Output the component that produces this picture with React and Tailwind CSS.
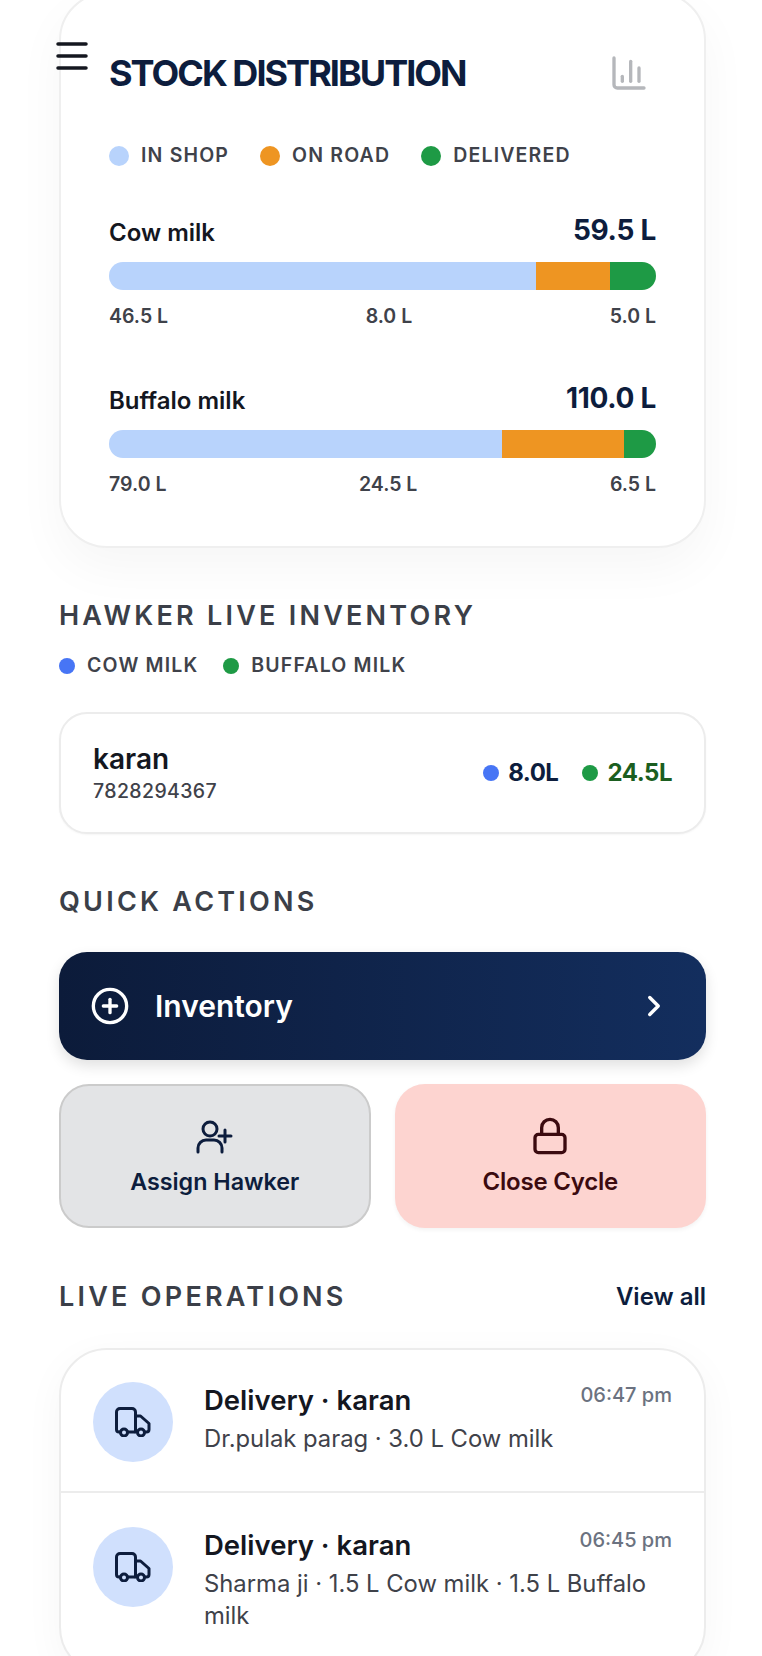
import React from 'react';
import { ChartColumn, ChevronRight, CirclePlus, Lock } from 'lucide-react';

const stock = [
  { name: 'Cow milk', total: '59.5 L', shop: 46.5, road: 8.0, done: 5.0 },
  { name: 'Buffalo milk', total: '110.0 L', shop: 79.0, road: 24.5, done: 6.5 },
];

const operations = [
  { time: '06:47 pm', text: 'Dr.pulak parag · 3.0 L Cow milk' },
  { time: '06:45 pm', text: 'Sharma ji · 1.5 L Cow milk · 1.5 L Buffalo milk' },
];

function LegendItem({ color, label }) {
  return (
    <div className="flex items-center gap-[12px]">
      <span className={`w-5 h-5 rounded-full ${color}`} />
      <span className="text-[19.5px] leading-none font-semibold tracking-[0.06em] text-[#3f424a]">{label}</span>
    </div>
  );
}

function StockRow({ item }) {
  return (
    <div>
      <div className="flex justify-between items-end h-[36px]">
        <span className="text-[24px] leading-[28px] mb-[7px] font-semibold text-[#14171f]">{item.name}</span>
        <span className="text-[28px] leading-[36px] mb-[6px] font-bold tracking-[-0.01em] text-[#0d1d3d]">{item.total}</span>
      </div>
      <div className="flex h-[28px] mt-[8px] rounded-full overflow-hidden">
        <div className="bg-[#b8d3fc]" style={{ flexGrow: item.shop, flexBasis: 0 }} />
        <div className="bg-[#ee9522]" style={{ flexGrow: item.road, flexBasis: 0 }} />
        <div className="bg-[#1e9a45]" style={{ flexGrow: item.done, flexBasis: 0 }} />
      </div>
      <div className="flex justify-between mt-[14px] text-[19.5px] leading-[24px] font-semibold text-[#3f424a]">
        <span>{item.shop.toFixed(1)} L</span>
        <span>{item.road.toFixed(1)} L</span>
        <span>{item.done.toFixed(1)} L</span>
      </div>
    </div>
  );
}

function SectionTitle({ children }) {
  return <h2 className="text-[27px] leading-[34px] font-semibold tracking-[0.12em] text-[#3b3f48]">{children}</h2>;
}

function TruckIcon() {
  return (
    <svg width="36" height="30" viewBox="0 0 36 30" fill="none" stroke="#0d1d3d" strokeWidth="3" strokeLinecap="round" strokeLinejoin="round">
      <path d="M5.5 25H4a2.5 2.5 0 0 1-2.5-2.5V5A3.5 3.5 0 0 1 5 1.5h12A3.5 3.5 0 0 1 20.5 5V25" />
      <path d="M12.5 25h7" />
      <path d="M20.5 9h5l8.5 7.5v6a2.5 2.5 0 0 1-2.5 2.5h-1" />
      <circle cx="9" cy="25.5" r="3.5" />
      <circle cx="26" cy="25.5" r="3.5" />
    </svg>
  );
}

function AssignIcon() {
  return (
    <svg width="38" height="34" viewBox="0 0 38 34" fill="none" stroke="#0d1d3d" strokeWidth="3" strokeLinecap="round">
      <circle cx="14" cy="9" r="7" />
      <path d="M2 32v-4a8 8 0 0 1 8-8h8a8 8 0 0 1 8 8v4" />
      <path d="M29 10v12M23 16h12" />
    </svg>
  );
}

function OperationRow({ op, last }) {
  return (
    <div className={`flex gap-[31px] px-[32px] ${last ? 'pt-[34px] pb-[41px]' : 'pt-[32px] pb-[29px] border-b-2 border-[#ececec]'}`}>
      <div className="w-[80px] h-[80px] shrink-0 rounded-full bg-[#d0e0fd] flex items-center justify-center">
        <TruckIcon />
      </div>
      <div className="flex-1 min-w-0">
        <div className="flex justify-between items-start">
          <span className="text-[27.5px] leading-[36px] font-semibold text-[#14171f]">Delivery · karan</span>
          <span className="text-[20px] leading-[26px] font-medium text-[#6b7280]">{op.time}</span>
        </div>
        <p className="mt-[5px] text-[23.8px] leading-[32px] text-[#3f424a]">{op.text}</p>
      </div>
    </div>
  );
}

export default function App() {
  return (
    <div className="relative h-[1656px] overflow-hidden bg-white pl-[59px] pr-[56px]" style={{ fontFamily: 'Inter, sans-serif' }}>
      {/* menu button floats over the page */}
      <button className="absolute left-[56px] top-[42px]">
        <svg width="32" height="28" viewBox="0 0 32 28" fill="none" stroke="#14171f" strokeWidth="3.5" strokeLinecap="round">
          <path d="M2 2h28M2 14h28M2 26h28" />
        </svg>
      </button>

      <section className="-mt-[8px] rounded-[48px] border-2 border-[#efefef] bg-white px-[48px] pt-[61px] pb-[50px] shadow-[0_20px_50px_rgba(0,0,0,0.04)]">
        <div className="flex justify-between items-center h-[36px]">
          <h1 className="text-[36px] leading-[36px] font-bold tracking-[-0.055em] text-[#0d1d3d]">STOCK DISTRIBUTION</h1>
          <ChartColumn size={40} strokeWidth={2} className="text-[#b5b7bb] mr-[7px]" />
        </div>
        <div className="flex gap-[31px] mt-[55px]">
          <LegendItem color="bg-[#b8d3fc]" label="IN SHOP" />
          <LegendItem color="bg-[#ee9522]" label="ON ROAD" />
          <LegendItem color="bg-[#1e9a45]" label="DELIVERED" />
        </div>
        <div className="flex flex-col gap-[58px] mt-[52px]">
          {stock.map(item => (
            <StockRow key={item.name} item={item} />
          ))}
        </div>
      </section>

      <section className="mt-[51px]">
        <SectionTitle>HAWKER LIVE INVENTORY</SectionTitle>
        <div className="flex items-center gap-[25px] mt-[23px]">
          <div className="flex items-center gap-[12px]">
            <span className="w-4 h-4 rounded-full bg-[#4775f5]" />
            <span className="text-[19.5px] leading-none font-semibold tracking-[0.06em] text-[#3f424a]">COW MILK</span>
          </div>
          <div className="flex items-center gap-[12px]">
            <span className="w-4 h-4 rounded-full bg-[#1e9a45]" />
            <span className="text-[19.5px] leading-none font-semibold tracking-[0.06em] text-[#3f424a]">BUFFALO MILK</span>
          </div>
        </div>
        <div className="flex justify-between items-center h-[122px] mt-[36px] px-[32px] rounded-[28px] border-2 border-[#ececec] bg-white shadow-[0_1px_2px_rgba(0,0,0,0.04)]">
          <div>
            <div className="text-[28px] leading-[34px] font-semibold text-[#14171f]">karan</div>
            <div className="mt-[3px] text-[19.5px] leading-[24px] font-medium text-[#3f424a] tracking-[0.02em]">7828294367</div>
          </div>
          <div className="flex items-center gap-[24px] text-[24px] leading-none font-bold tracking-[-0.02em]">
            <div className="flex items-center gap-[9px] text-[#0d1d3d]">
              <span className="w-4 h-4 rounded-full bg-[#4775f5]" />
              8.0L
            </div>
            <div className="flex items-center gap-[9px] text-[#1b5e20]">
              <span className="w-4 h-4 rounded-full bg-[#1e9a45]" />
              24.5L
            </div>
          </div>
        </div>
      </section>

      <section className="mt-[51px]">
        <SectionTitle>QUICK ACTIONS</SectionTitle>
        <button className="flex items-center w-full h-[108px] mt-[33px] pl-[31px] pr-[35px] rounded-[28px] bg-gradient-to-r from-[#0c1b3a] to-[#132e5e] text-white shadow-[0_6px_14px_rgba(0,0,0,0.12)]">
          <CirclePlus size={40} strokeWidth={2} />
          <span className="ml-[25px] text-[30px] leading-none font-semibold">Inventory</span>
          <ChevronRight size={34} strokeWidth={2.4} className="ml-auto" />
        </button>
        <div className="grid grid-cols-2 gap-[24px] mt-[24px]">
          <button className="flex flex-col items-center justify-center h-[144px] pt-[6px] rounded-[30px] border-2 border-[#cbcbcb] bg-[#e3e4e6] text-[#0d1d3d]">
            <AssignIcon />
            <span className="mt-[12px] text-[23.3px] leading-[32px] font-semibold">Assign Hawker</span>
          </button>
          <button className="flex flex-col items-center justify-center h-[144px] pt-[3px] rounded-[30px] bg-[#fdd4d0] text-[#3b0a0f] shadow-[0_2px_4px_rgba(0,0,0,0.05)]">
            <Lock size={40} strokeWidth={2} />
            <span className="mt-[10px] text-[24px] leading-[32px] font-semibold tracking-[-0.01em]">Close Cycle</span>
          </button>
        </div>
      </section>

      <section className="mt-[52px]">
        <div className="flex justify-between items-center">
          <SectionTitle>LIVE OPERATIONS</SectionTitle>
          <button className="text-[24px] leading-[32px] font-semibold text-[#0d1d3d]">View all</button>
        </div>
        <div className="mt-[34px] rounded-[48px] border-2 border-[#ececec] bg-white shadow-[0_10px_40px_rgba(0,0,0,0.04)]">
          {operations.map((op, i) => (
            <OperationRow key={op.time} op={op} last={i === operations.length - 1} />
          ))}
        </div>
      </section>
    </div>
  );
}
